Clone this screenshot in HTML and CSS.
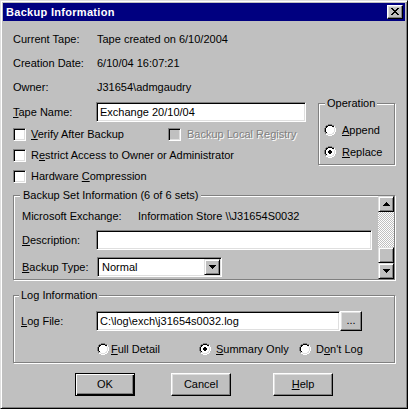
FILE: index.html
```html
<!DOCTYPE html>
<html>
<head>
<meta charset="utf-8">
<title>Backup Information</title>
<link rel="stylesheet" href="styles.css">
</head>
<body>
<svg class="defs" width="0" height="0" aria-hidden="true">
  <defs>
    <symbol id="radio" viewBox="0 0 12 12">
      <path fill="#808080" d="M4 0h4v1H4z M2 1h2v1H2z M8 1h2v1H8z M1 2h1v2H1z M0 4h1v4H0z M1 8h1v2H1z"/>
      <path fill="#000" d="M4 1h4v1H4z M2 2h2v1H2z M8 2h2v1H8z M2 3h1v1H2z M1 4h1v4H1z M2 8h1v1H2z"/>
      <path fill="#fff" d="M10 2h1v2h-1z M11 4h1v4h-1z M10 8h1v2h-1z M2 10h2v1H2z M8 10h2v1H8z M4 11h4v1H4z"/>
      <path fill="#dfdfdf" d="M9 3h1v1H9z M10 4h1v4h-1z M9 8h1v1H9z M2 9h2v1H2z M8 9h2v1H8z M4 10h4v1H4z"/>
      <path fill="#fff" d="M4 2h4v1H4z M3 3h6v1H3z M2 4h8v4H2z M3 8h6v1H3z M4 9h4v1H4z"/>
    </symbol>
    <symbol id="dot" viewBox="0 0 12 12">
      <path fill="#000" d="M5 4h2v1H5z M4 5h4v2H4z M5 7h2v1H5z"/>
    </symbol>
    <symbol id="closex" viewBox="0 0 8 7">
      <path fill="#000" d="M0 0h2v1H0z M6 0h2v1H6z M1 1h2v1H1z M5 1h2v1H5z M2 2h4v1H2z M3 3h2v1H3z M2 4h4v1H2z M1 5h2v1H1z M5 5h2v1H5z M0 6h2v1H0z M6 6h2v1H6z"/>
    </symbol>
    <symbol id="arrow-up" viewBox="0 0 7 4">
      <path fill="#000" d="M3 0h1v1H3z M2 1h3v1H2z M1 2h5v1H1z M0 3h7v1H0z"/>
    </symbol>
    <symbol id="arrow-down" viewBox="0 0 7 4">
      <path fill="#000" d="M0 0h7v1H0z M1 1h5v1H1z M2 2h3v1H2z M3 3h1v1H3z"/>
    </symbol>
  </defs>
</svg>

<div class="window">
  <div class="titlebar">
    <span class="title">Backup Information</span>
    <span class="close-btn"><svg class="close-x" width="8" height="7"><use href="#closex"/></svg></span>
  </div>

  <div class="content">
    <div class="info-row"><span class="info-label">Current Tape:</span><span>Tape created on 6/10/2004</span></div>
    <div class="info-row"><span class="info-label">Creation Date:</span><span>6/10/04 16:07:21</span></div>
    <div class="info-row"><span class="info-label">Owner:</span><span>J31654\admgaudry</span></div>

    <div class="middle">
      <div class="left-col">
        <div class="tape-row">
          <span class="tape-label"><u>T</u>ape Name:</span>
          <div class="field tape-input">Exchange 20/10/04</div>
        </div>
        <div class="check-row first">
          <span class="check-item verify"><span class="checkbox"></span><span><u>V</u>erify After Backup</span></span>
          <span class="check-item disabled"><span class="checkbox"></span><span class="dis-text">Backup Local Registry</span></span>
        </div>
        <div class="check-row">
          <span class="check-item"><span class="checkbox"></span><span>R<u>e</u>strict Access to Owner or Administrator</span></span>
        </div>
        <div class="check-row">
          <span class="check-item"><span class="checkbox"></span><span>Hardware <u>C</u>ompression</span></span>
        </div>
      </div>

      <div class="group operation">
        <span class="group-title op-title">Operation</span>
        <div class="op-radio first">
          <svg class="radio" width="12" height="12"><use href="#radio"/></svg>
          <span><u>A</u>ppend</span>
        </div>
        <div class="op-radio">
          <svg class="radio" width="12" height="12"><use href="#radio"/><use href="#dot"/></svg>
          <span><u>R</u>eplace</span>
        </div>
      </div>
    </div>

    <div class="group backup-group">
      <div class="bs-fields">
        <span class="group-title bs-title">Backup Set Information (6 of 6 sets)</span>
        <div class="bs-row ex-row"><span class="ex-label">Microsoft Exchange:</span><span>Information Store \\J31654S0032</span></div>
        <div class="bs-row desc-row"><span class="bs-label"><u>D</u>escription:</span><div class="field desc-input"></div></div>
        <div class="bs-row type-row">
          <span class="bs-label"><u>B</u>ackup Type:</span>
          <div class="field combo">
            <span class="combo-text">Normal</span>
            <span class="combo-btn"><svg width="7" height="4"><use href="#arrow-down"/></svg></span>
          </div>
        </div>
      </div>
      <div class="scrollbar">
        <span class="sb-btn"><svg width="7" height="4"><use href="#arrow-up"/></svg></span>
        <div class="sb-track"><span class="sb-thumb"></span></div>
        <span class="sb-btn"><svg width="7" height="4"><use href="#arrow-down"/></svg></span>
      </div>
    </div>

    <div class="group log-group">
      <span class="group-title log-title">Log Information</span>
      <div class="log-row">
        <span class="log-label"><u>L</u>og File:</span>
        <div class="field log-input">C:\log\exch\j31654s0032.log</div>
        <span class="browse-btn">...</span>
      </div>
      <div class="log-radios">
        <span class="log-radio full">
          <svg class="radio" width="12" height="12"><use href="#radio"/></svg>
          <span><u>F</u>ull Detail</span>
        </span>
        <span class="log-radio summary">
          <svg class="radio" width="12" height="12"><use href="#radio"/><use href="#dot"/></svg>
          <span><u>S</u>ummary Only</span>
        </span>
        <span class="log-radio dont">
          <svg class="radio" width="12" height="12"><use href="#radio"/></svg>
          <span>D<u>o</u>n't Log</span>
        </span>
      </div>
    </div>

    <div class="buttons">
      <span class="btn default ok">OK</span>
      <span class="btn cancel">Cancel</span>
      <span class="btn help"><u>H</u>elp</span>
    </div>
  </div>
</div>
</body>
</html>
```

FILE: styles.css
```css
* {
  box-sizing: border-box;
}

html,
body {
  margin: 0;
  padding: 0;
}

body {
  background: #c0c0c0;
  font-family: "Liberation Sans", Arial, sans-serif;
  font-size: 11px;
  line-height: 13px;
  color: #000;
}

.defs {
  position: absolute;
  width: 0;
  height: 0;
}

u {
  text-underline-offset: 1px;
}

svg {
  display: block;
  shape-rendering: crispEdges;
}

.window {
  width: 408px;
  height: 409px;
  border: 1px solid;
  border-color: #dfdfdf #000 #000 #dfdfdf;
  box-shadow: inset 1px 1px #fff, inset -1px -1px #808080;
  padding: 2px;
  background: #c0c0c0;
  display: flex;
  flex-direction: column;
}

/* ---------- title bar ---------- */
.titlebar {
  flex-shrink: 0;
  height: 18px;
  background: #000080;
  color: #fff;
  display: flex;
  align-items: center;
  justify-content: space-between;
  padding: 0 2px 0 3px;
}

.title {
  font-weight: bold;
  letter-spacing: 0.3px;
}

.close-btn {
  width: 16px;
  height: 14px;
  background: #c0c0c0;
  border: 1px solid;
  border-color: #fff #000 #000 #fff;
  box-shadow: inset -1px -1px #808080, inset 1px 1px #dfdfdf;
  display: flex;
  align-items: center;
  justify-content: center;
  padding-bottom: 1px;
}

/* ---------- content ---------- */
.content {
  flex: 1;
  padding: 6px 10px 0;
  display: flex;
  flex-direction: column;
}

.content > * {
  flex-shrink: 0;
}

.info-row {
  height: 24px;
  display: flex;
  align-items: center;
}

.info-label {
  width: 84px;
}

/* ---------- sunken fields ---------- */
.field {
  height: 20px;
  background: #fff;
  border: 1px solid;
  border-color: #808080 #fff #fff #808080;
  box-shadow: inset 1px 1px #000, inset -1px -1px #dfdfdf;
  padding: 0 3px;
  display: flex;
  align-items: center;
  white-space: nowrap;
}

.checkbox {
  width: 13px;
  height: 13px;
  flex-shrink: 0;
  background: #fff;
  border: 1px solid;
  border-color: #808080 #fff #fff #808080;
  box-shadow: inset 1px 1px #000, inset -1px -1px #dfdfdf;
}

.disabled .checkbox {
  background: #c0c0c0;
}

.dis-text {
  color: #808080;
  text-shadow: 1px 1px 0 #fff;
}

/* ---------- middle block ---------- */
.middle {
  display: flex;
  align-items: flex-start;
}

.left-col {
  flex: 1;
  display: flex;
  flex-direction: column;
}

.tape-row {
  margin-top: 3px;
  height: 20px;
  display: flex;
  align-items: center;
}

.tape-label {
  width: 83px;
}

.tape-input {
  width: 210px;
}

.check-row {
  height: 21px;
  display: flex;
  align-items: center;
}

.check-row.first {
  margin-top: 2px;
}

.check-item {
  display: flex;
  align-items: center;
  gap: 5px;
}

.check-item.verify {
  width: 155px;
}

.check-item.disabled {
  gap: 6px;
}

/* ---------- group boxes ---------- */
.group {
  border: 1px solid #808080;
  box-shadow: inset 1px 1px #fff, 1px 1px #fff;
  display: flex;
  flex-direction: column;
}

.group-title {
  align-self: flex-start;
  height: 13px;
  margin-top: -7px;
  padding: 0 2px;
  background: #c0c0c0;
  white-space: nowrap;
}

.operation {
  margin-top: 4px;
  width: 77px;
  height: 62px;
  padding-left: 5px;
}

.op-title {
  margin-left: 1px;
}

.op-radio {
  height: 20px;
  display: flex;
  align-items: center;
  gap: 6px;
  margin-top: 2px;
}

.op-radio.first {
  margin-top: 10px;
}

.radio {
  flex-shrink: 0;
}

/* backup set group */
.backup-group {
  margin-top: 8px;
  height: 85px;
  flex-direction: row;
}

.bs-fields {
  flex: 1;
  display: flex;
  flex-direction: column;
  padding-left: 8px;
}

.bs-title {
  margin-left: -2px;
  padding: 0 3px;
}

.bs-row {
  display: flex;
  align-items: center;
}

.ex-row {
  margin-top: 8px;
  height: 13px;
}

.ex-label {
  width: 116px;
}

.desc-row {
  margin-top: 7px;
  height: 20px;
}

.type-row {
  margin-top: 7px;
  height: 20px;
}

.bs-label {
  width: 74px;
}

.desc-input {
  width: 276px;
}

.combo {
  margin-left: 1px;
  width: 125px;
  padding: 0 2px 0 4px;
  justify-content: space-between;
}

.combo-btn,
.sb-btn {
  width: 16px;
  height: 16px;
  background: #c0c0c0;
  border: 1px solid;
  border-color: #dfdfdf #000 #000 #dfdfdf;
  box-shadow: inset 1px 1px #fff, inset -1px -1px #808080;
  display: flex;
  align-items: center;
  justify-content: center;
}

.combo-btn {
  margin-right: -1px;
}

.scrollbar {
  width: 16px;
  display: flex;
  flex-direction: column;
}

.sb-btn {
  flex-shrink: 0;
}

.sb-track {
  flex: 1;
  display: flex;
  flex-direction: column;
  justify-content: flex-end;
  background-color: #c0c0c0;
  background-image: conic-gradient(#fff 25%, #c0c0c0 0 50%, #fff 0 75%, #c0c0c0 0);
  background-size: 2px 2px;
}

.sb-thumb {
  height: 16px;
  background: #c0c0c0;
  border: 1px solid;
  border-color: #dfdfdf #000 #000 #dfdfdf;
  box-shadow: inset 1px 1px #fff, inset -1px -1px #808080;
}

/* log group */
.log-group {
  margin-top: 15px;
  height: 68px;
  padding-left: 7px;
}

.log-title {
  margin-left: -2px;
}

.log-row {
  margin-top: 9px;
  height: 20px;
  display: flex;
  align-items: center;
}

.log-label {
  width: 75px;
}

.log-input {
  width: 244px;
}

.browse-btn {
  width: 22px;
  height: 20px;
  border: 1px solid;
  border-color: #fff #000 #000 #fff;
  box-shadow: inset -1px -1px #808080, inset 1px 1px #dfdfdf;
  display: flex;
  align-items: center;
  justify-content: center;
  padding-bottom: 2px;
}

.log-radios {
  margin-top: 8px;
  margin-left: 76px;
  height: 20px;
  display: flex;
  align-items: center;
}

.log-radio {
  display: flex;
  align-items: center;
  gap: 5px;
}

.log-radio.full {
  width: 102px;
  gap: 2px;
}

.log-radio.summary {
  width: 100px;
}

/* buttons */
.buttons {
  margin-top: 10px;
  display: flex;
}

.btn {
  width: 60px;
  height: 23px;
  border: 1px solid;
  border-color: #fff #000 #000 #fff;
  box-shadow: inset -1px -1px #808080, inset 1px 1px #dfdfdf;
  display: flex;
  align-items: center;
  justify-content: center;
}

.btn.default {
  border-color: #000;
  box-shadow: inset 1px 1px #fff, inset -1px -1px #000, inset -2px -2px #808080;
}

.ok {
  margin-left: 62px;
}

.cancel {
  margin-left: 36px;
}

.help {
  margin-left: 42px;
}
```
